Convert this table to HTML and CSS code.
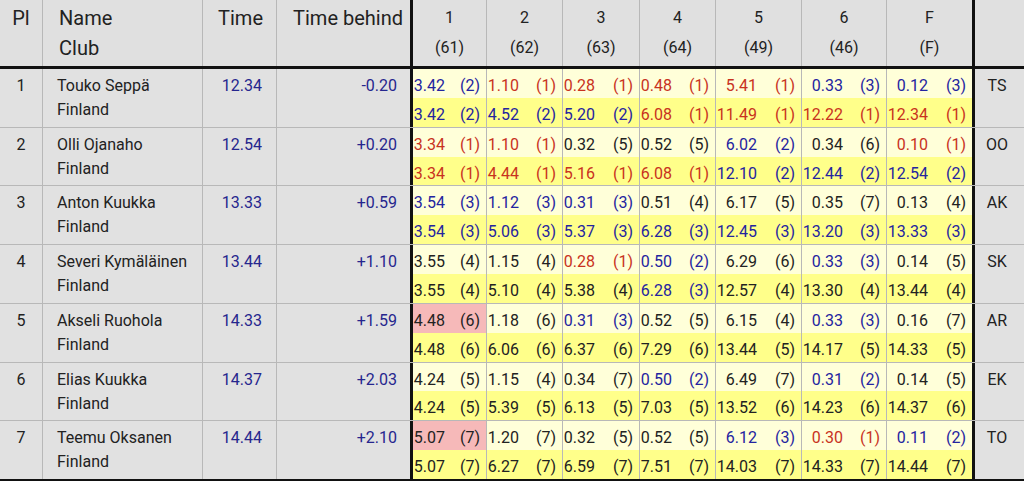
FILE: index.html
```html
<!DOCTYPE html>
<html lang="en">
<head>
<meta charset="utf-8">
<title>Results</title>
<link rel="stylesheet" href="styles.css">
</head>
<body>
<div class="board">
  <div class="head">
    <div class="c pl"><div>Pl</div></div>
    <div class="c nm"><div>Name</div><div>Club</div></div>
    <div class="c tm"><div>Time</div></div>
    <div class="c tb"><div>Time behind</div></div>
    <div class="c sp s1"><div>1</div><div>(61)</div></div>
    <div class="c sp s2"><div>2</div><div>(62)</div></div>
    <div class="c sp s3"><div>3</div><div>(63)</div></div>
    <div class="c sp s4"><div>4</div><div>(64)</div></div>
    <div class="c sp s5"><div>5</div><div>(49)</div></div>
    <div class="c sp s6"><div>6</div><div>(46)</div></div>
    <div class="c sp s7"><div>F</div><div>(F)</div></div>
    <div class="c ini"></div>
  </div>
  <div class="rows">
    <div class="row">
      <div class="c pl">1</div>
      <div class="c nm"><div>Touko Seppä</div><div>Finland</div></div>
      <div class="c tm">12.34</div>
      <div class="c tb">-0.20</div>
      <div class="c sp s1"><div class="band lt b"><span class="t">3.42</span><span class="k">(2)</span></div><div class="band dk b"><span class="t">3.42</span><span class="k">(2)</span></div></div>
      <div class="c sp s2"><div class="band lt r"><span class="t">1.10</span><span class="k">(1)</span></div><div class="band dk b"><span class="t">4.52</span><span class="k">(2)</span></div></div>
      <div class="c sp s3"><div class="band lt r"><span class="t">0.28</span><span class="k">(1)</span></div><div class="band dk b"><span class="t">5.20</span><span class="k">(2)</span></div></div>
      <div class="c sp s4"><div class="band lt r"><span class="t">0.48</span><span class="k">(1)</span></div><div class="band dk r"><span class="t">6.08</span><span class="k">(1)</span></div></div>
      <div class="c sp s5"><div class="band lt r"><span class="t">5.41</span><span class="k">(1)</span></div><div class="band dk r"><span class="t">11.49</span><span class="k">(1)</span></div></div>
      <div class="c sp s6"><div class="band lt b"><span class="t">0.33</span><span class="k">(3)</span></div><div class="band dk r"><span class="t">12.22</span><span class="k">(1)</span></div></div>
      <div class="c sp s7"><div class="band lt b"><span class="t">0.12</span><span class="k">(3)</span></div><div class="band dk r"><span class="t">12.34</span><span class="k">(1)</span></div></div>
      <div class="c ini">TS</div>
    </div>
    <div class="row">
      <div class="c pl">2</div>
      <div class="c nm"><div>Olli Ojanaho</div><div>Finland</div></div>
      <div class="c tm">12.54</div>
      <div class="c tb">+0.20</div>
      <div class="c sp s1"><div class="band lt r"><span class="t">3.34</span><span class="k">(1)</span></div><div class="band dk r"><span class="t">3.34</span><span class="k">(1)</span></div></div>
      <div class="c sp s2"><div class="band lt r"><span class="t">1.10</span><span class="k">(1)</span></div><div class="band dk r"><span class="t">4.44</span><span class="k">(1)</span></div></div>
      <div class="c sp s3"><div class="band lt"><span class="t">0.32</span><span class="k">(5)</span></div><div class="band dk r"><span class="t">5.16</span><span class="k">(1)</span></div></div>
      <div class="c sp s4"><div class="band lt"><span class="t">0.52</span><span class="k">(5)</span></div><div class="band dk r"><span class="t">6.08</span><span class="k">(1)</span></div></div>
      <div class="c sp s5"><div class="band lt b"><span class="t">6.02</span><span class="k">(2)</span></div><div class="band dk b"><span class="t">12.10</span><span class="k">(2)</span></div></div>
      <div class="c sp s6"><div class="band lt"><span class="t">0.34</span><span class="k">(6)</span></div><div class="band dk b"><span class="t">12.44</span><span class="k">(2)</span></div></div>
      <div class="c sp s7"><div class="band lt r"><span class="t">0.10</span><span class="k">(1)</span></div><div class="band dk b"><span class="t">12.54</span><span class="k">(2)</span></div></div>
      <div class="c ini">OO</div>
    </div>
    <div class="row">
      <div class="c pl">3</div>
      <div class="c nm"><div>Anton Kuukka</div><div>Finland</div></div>
      <div class="c tm">13.33</div>
      <div class="c tb">+0.59</div>
      <div class="c sp s1"><div class="band lt b"><span class="t">3.54</span><span class="k">(3)</span></div><div class="band dk b"><span class="t">3.54</span><span class="k">(3)</span></div></div>
      <div class="c sp s2"><div class="band lt b"><span class="t">1.12</span><span class="k">(3)</span></div><div class="band dk b"><span class="t">5.06</span><span class="k">(3)</span></div></div>
      <div class="c sp s3"><div class="band lt b"><span class="t">0.31</span><span class="k">(3)</span></div><div class="band dk b"><span class="t">5.37</span><span class="k">(3)</span></div></div>
      <div class="c sp s4"><div class="band lt"><span class="t">0.51</span><span class="k">(4)</span></div><div class="band dk b"><span class="t">6.28</span><span class="k">(3)</span></div></div>
      <div class="c sp s5"><div class="band lt"><span class="t">6.17</span><span class="k">(5)</span></div><div class="band dk b"><span class="t">12.45</span><span class="k">(3)</span></div></div>
      <div class="c sp s6"><div class="band lt"><span class="t">0.35</span><span class="k">(7)</span></div><div class="band dk b"><span class="t">13.20</span><span class="k">(3)</span></div></div>
      <div class="c sp s7"><div class="band lt"><span class="t">0.13</span><span class="k">(4)</span></div><div class="band dk b"><span class="t">13.33</span><span class="k">(3)</span></div></div>
      <div class="c ini">AK</div>
    </div>
    <div class="row">
      <div class="c pl">4</div>
      <div class="c nm"><div>Severi Kymäläinen</div><div>Finland</div></div>
      <div class="c tm">13.44</div>
      <div class="c tb">+1.10</div>
      <div class="c sp s1"><div class="band lt"><span class="t">3.55</span><span class="k">(4)</span></div><div class="band dk"><span class="t">3.55</span><span class="k">(4)</span></div></div>
      <div class="c sp s2"><div class="band lt"><span class="t">1.15</span><span class="k">(4)</span></div><div class="band dk"><span class="t">5.10</span><span class="k">(4)</span></div></div>
      <div class="c sp s3"><div class="band lt r"><span class="t">0.28</span><span class="k">(1)</span></div><div class="band dk"><span class="t">5.38</span><span class="k">(4)</span></div></div>
      <div class="c sp s4"><div class="band lt b"><span class="t">0.50</span><span class="k">(2)</span></div><div class="band dk b"><span class="t">6.28</span><span class="k">(3)</span></div></div>
      <div class="c sp s5"><div class="band lt"><span class="t">6.29</span><span class="k">(6)</span></div><div class="band dk"><span class="t">12.57</span><span class="k">(4)</span></div></div>
      <div class="c sp s6"><div class="band lt b"><span class="t">0.33</span><span class="k">(3)</span></div><div class="band dk"><span class="t">13.30</span><span class="k">(4)</span></div></div>
      <div class="c sp s7"><div class="band lt"><span class="t">0.14</span><span class="k">(5)</span></div><div class="band dk"><span class="t">13.44</span><span class="k">(4)</span></div></div>
      <div class="c ini">SK</div>
    </div>
    <div class="row">
      <div class="c pl">5</div>
      <div class="c nm"><div>Akseli Ruohola</div><div>Finland</div></div>
      <div class="c tm">14.33</div>
      <div class="c tb">+1.59</div>
      <div class="c sp s1"><div class="band pk"><span class="t">4.48</span><span class="k">(6)</span></div><div class="band dk"><span class="t">4.48</span><span class="k">(6)</span></div></div>
      <div class="c sp s2"><div class="band lt"><span class="t">1.18</span><span class="k">(6)</span></div><div class="band dk"><span class="t">6.06</span><span class="k">(6)</span></div></div>
      <div class="c sp s3"><div class="band lt b"><span class="t">0.31</span><span class="k">(3)</span></div><div class="band dk"><span class="t">6.37</span><span class="k">(6)</span></div></div>
      <div class="c sp s4"><div class="band lt"><span class="t">0.52</span><span class="k">(5)</span></div><div class="band dk"><span class="t">7.29</span><span class="k">(6)</span></div></div>
      <div class="c sp s5"><div class="band lt"><span class="t">6.15</span><span class="k">(4)</span></div><div class="band dk"><span class="t">13.44</span><span class="k">(5)</span></div></div>
      <div class="c sp s6"><div class="band lt b"><span class="t">0.33</span><span class="k">(3)</span></div><div class="band dk"><span class="t">14.17</span><span class="k">(5)</span></div></div>
      <div class="c sp s7"><div class="band lt"><span class="t">0.16</span><span class="k">(7)</span></div><div class="band dk"><span class="t">14.33</span><span class="k">(5)</span></div></div>
      <div class="c ini">AR</div>
    </div>
    <div class="row">
      <div class="c pl">6</div>
      <div class="c nm"><div>Elias Kuukka</div><div>Finland</div></div>
      <div class="c tm">14.37</div>
      <div class="c tb">+2.03</div>
      <div class="c sp s1"><div class="band lt"><span class="t">4.24</span><span class="k">(5)</span></div><div class="band dk"><span class="t">4.24</span><span class="k">(5)</span></div></div>
      <div class="c sp s2"><div class="band lt"><span class="t">1.15</span><span class="k">(4)</span></div><div class="band dk"><span class="t">5.39</span><span class="k">(5)</span></div></div>
      <div class="c sp s3"><div class="band lt"><span class="t">0.34</span><span class="k">(7)</span></div><div class="band dk"><span class="t">6.13</span><span class="k">(5)</span></div></div>
      <div class="c sp s4"><div class="band lt b"><span class="t">0.50</span><span class="k">(2)</span></div><div class="band dk"><span class="t">7.03</span><span class="k">(5)</span></div></div>
      <div class="c sp s5"><div class="band lt"><span class="t">6.49</span><span class="k">(7)</span></div><div class="band dk"><span class="t">13.52</span><span class="k">(6)</span></div></div>
      <div class="c sp s6"><div class="band lt b"><span class="t">0.31</span><span class="k">(2)</span></div><div class="band dk"><span class="t">14.23</span><span class="k">(6)</span></div></div>
      <div class="c sp s7"><div class="band lt"><span class="t">0.14</span><span class="k">(5)</span></div><div class="band dk"><span class="t">14.37</span><span class="k">(6)</span></div></div>
      <div class="c ini">EK</div>
    </div>
    <div class="row">
      <div class="c pl">7</div>
      <div class="c nm"><div>Teemu Oksanen</div><div>Finland</div></div>
      <div class="c tm">14.44</div>
      <div class="c tb">+2.10</div>
      <div class="c sp s1"><div class="band pk"><span class="t">5.07</span><span class="k">(7)</span></div><div class="band dk"><span class="t">5.07</span><span class="k">(7)</span></div></div>
      <div class="c sp s2"><div class="band lt"><span class="t">1.20</span><span class="k">(7)</span></div><div class="band dk"><span class="t">6.27</span><span class="k">(7)</span></div></div>
      <div class="c sp s3"><div class="band lt"><span class="t">0.32</span><span class="k">(5)</span></div><div class="band dk"><span class="t">6.59</span><span class="k">(7)</span></div></div>
      <div class="c sp s4"><div class="band lt"><span class="t">0.52</span><span class="k">(5)</span></div><div class="band dk"><span class="t">7.51</span><span class="k">(7)</span></div></div>
      <div class="c sp s5"><div class="band lt b"><span class="t">6.12</span><span class="k">(3)</span></div><div class="band dk"><span class="t">14.03</span><span class="k">(7)</span></div></div>
      <div class="c sp s6"><div class="band lt r"><span class="t">0.30</span><span class="k">(1)</span></div><div class="band dk"><span class="t">14.33</span><span class="k">(7)</span></div></div>
      <div class="c sp s7"><div class="band lt b"><span class="t">0.11</span><span class="k">(2)</span></div><div class="band dk"><span class="t">14.44</span><span class="k">(7)</span></div></div>
      <div class="c ini">TO</div>
    </div>
  </div>
</div>
</body>
</html>
```

FILE: styles.css
```css
html, body {
  margin: 0;
  padding: 0;
  background: #ffffff;
}

body {
  font-family: Roboto, "Liberation Sans", sans-serif;
  font-size: 16px;
  color: #222222;
}

.board {
  width: 1024px;
  height: 481px;
  display: flex;
  flex-direction: column;
  overflow: hidden;
}

.head {
  display: flex;
  height: 69px;
  box-sizing: border-box;
  border-bottom: 3px solid #111111;
  background: #e0e0e0;
  font-size: 20px;
  line-height: 30px;
  flex: none;
}

.head .c {
  padding-top: 3px;
}

.head .sp {
  font-size: 16px;
  text-align: center;
}

.head .nm {
  padding-left: 16px;
}

.head .tm {
  padding-right: 13px;
}

.head .tb {
  padding-right: 7px;
  color: #222222;
}

.head .tm {
  color: #222222;
}

.rows {
  height: 412px;
  box-sizing: border-box;
  border-bottom: 2px solid #111111;
  display: flex;
  flex-direction: column;
  flex: none;
}

.row {
  flex: 1 1 0;
  display: flex;
  box-sizing: border-box;
  border-bottom: 1px solid #b8b8b8;
  min-height: 0;
}

.row:last-child {
  border-bottom: none;
}

.c {
  box-sizing: border-box;
  border-right: 1px solid #b8b8b8;
  flex: none;
}

.pl { width: 43px; text-align: center; }
.nm { width: 160px; padding-left: 14px; white-space: nowrap; }
.tm { width: 74px; text-align: right; padding-right: 14px; }
.tb { width: 136px; text-align: right; padding-right: 13px; border-right: 3px solid #111111; }
.s1 { width: 74px; }
.s2 { width: 76px; }
.s3 { width: 77px; }
.s4 { width: 76px; }
.s5 { width: 86px; }
.s6 { width: 85px; }
.s7 { width: 88px; border-right: 3px solid #111111; }
.ini { width: 49px; text-align: center; padding-right: 5px; border-right: none; }

.row .pl,
.row .nm,
.row .tm,
.row .tb,
.row .ini {
  background: #e1e1e1;
  padding-top: 5px;
  line-height: 24px;
}

.row .tm,
.row .tb {
  color: #26268e;
}

.row .sp {
  display: flex;
  flex-direction: column;
}

.band {
  flex: 1 1 0;
  display: flex;
  align-items: center;
  padding-top: 4px;
  min-height: 0;
  white-space: nowrap;
}

.lt { background: #ffffd9; }
.dk { background: #ffff8a; }
.pk { background: #f6b9b9; }

.b { color: #2424a0; }
.r { color: #c8321e; }

.t {
  width: 32px;
  text-align: right;
  flex: none;
}

.s5 .t,
.s6 .t,
.s7 .t {
  width: 41px;
}

.k {
  margin-left: auto;
  padding-right: 6px;
}
```
